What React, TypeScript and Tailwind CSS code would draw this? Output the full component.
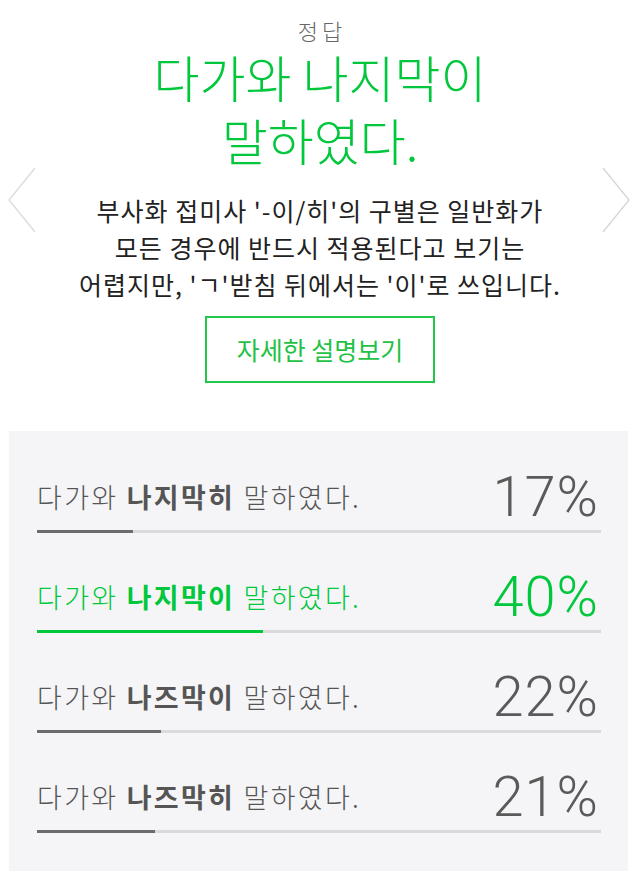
import React from "react";

const rows = [
  { pre: "다가와 ", bold: "나지막히", post: " 말하였다.", pct: 17, active: false },
  { pre: "다가와 ", bold: "나지막이", post: " 말하였다.", pct: 40, active: true },
  { pre: "다가와 ", bold: "나즈막이", post: " 말하였다.", pct: 22, active: false },
  { pre: "다가와 ", bold: "나즈막히", post: " 말하였다.", pct: 21, active: false },
];

export default function App() {
  return (
    <div
      className="relative w-[640px] h-[883px] bg-white overflow-hidden"
      style={{ fontFamily: '"Noto Sans CJK KR", "Noto Sans", sans-serif' }}
    >
      {/* chevrons */}
      <svg className="absolute left-[6px] top-[166px]" width="32" height="68" viewBox="0 0 32 68">
        <polyline points="29,2 3,34 29,66" fill="none" stroke="#dcdcdc" strokeWidth="1.3" />
      </svg>
      <svg className="absolute left-[600px] top-[166px]" width="32" height="68" viewBox="0 0 32 68">
        <polyline points="3,2 29,34 3,66" fill="none" stroke="#d6d6d6" strokeWidth="1.3" />
      </svg>

      <div className="pt-[16px] flex flex-col items-center text-center">
        <div className="pl-[4px] text-[22px] leading-[28px] tracking-[4px] text-[#666666] font-light">정답</div>
        <div className="mt-[1px] text-[50px] leading-[63px] text-[#00c73c] font-light">
          <div>다가와 나지막이</div>
          <div>말하였다.</div>
        </div>
        <div className="mt-[21px] text-[25px] leading-[37px] tracking-[1px] text-[#222222]">
          <div>부사화 접미사 '-이/히'의 구별은 일반화가</div>
          <div>모든 경우에 반드시 적용된다고 보기는</div>
          <div>어렵지만, 'ㄱ'받침 뒤에서는 '이'로 쓰입니다.</div>
        </div>
        <div className="mt-[13px] w-[230px] h-[67px] border-2 border-[#22c84a] flex items-center justify-center text-[25px] text-[#1fc245]">
          자세한 설명보기
        </div>
      </div>

      <div className="mt-[48px] ml-[9px] w-[619px] h-[440px] bg-[#f5f5f7] pt-[41px] pl-[28px] pr-[27px]">
        {rows.map((r, i) => (
          <div key={i} className="mb-[39px]">
            <div className="h-[50px] flex items-center justify-between">
              <div className={`text-[27px] tracking-[2.3px] ${r.active ? "text-[#00c73c]" : "text-[#555555]"}`}>
                <span className="font-light">{r.pre}</span>
                <span className="font-bold">{r.bold}</span>
                <span className="font-light">{r.post}</span>
              </div>
              <div
                className={`pr-[2px] text-[56px] leading-[50px] tracking-[1px] ${r.active ? "text-[#00c73c]" : "text-[#5a5a5a]"}`}
                style={{ fontFamily: 'Roboto, "Liberation Sans", sans-serif', fontWeight: 300 }}
              >
                {r.pct}%
              </div>
            </div>
            <div className="mt-[8px] h-[3px] bg-[#dadada]">
              <div
                className={`h-full ${r.active ? "bg-[#00c73c]" : "bg-[#6b6b6b]"}`}
                style={{ width: `${r.pct}%` }}
              />
            </div>
          </div>
        ))}
      </div>
    </div>
  );
}
